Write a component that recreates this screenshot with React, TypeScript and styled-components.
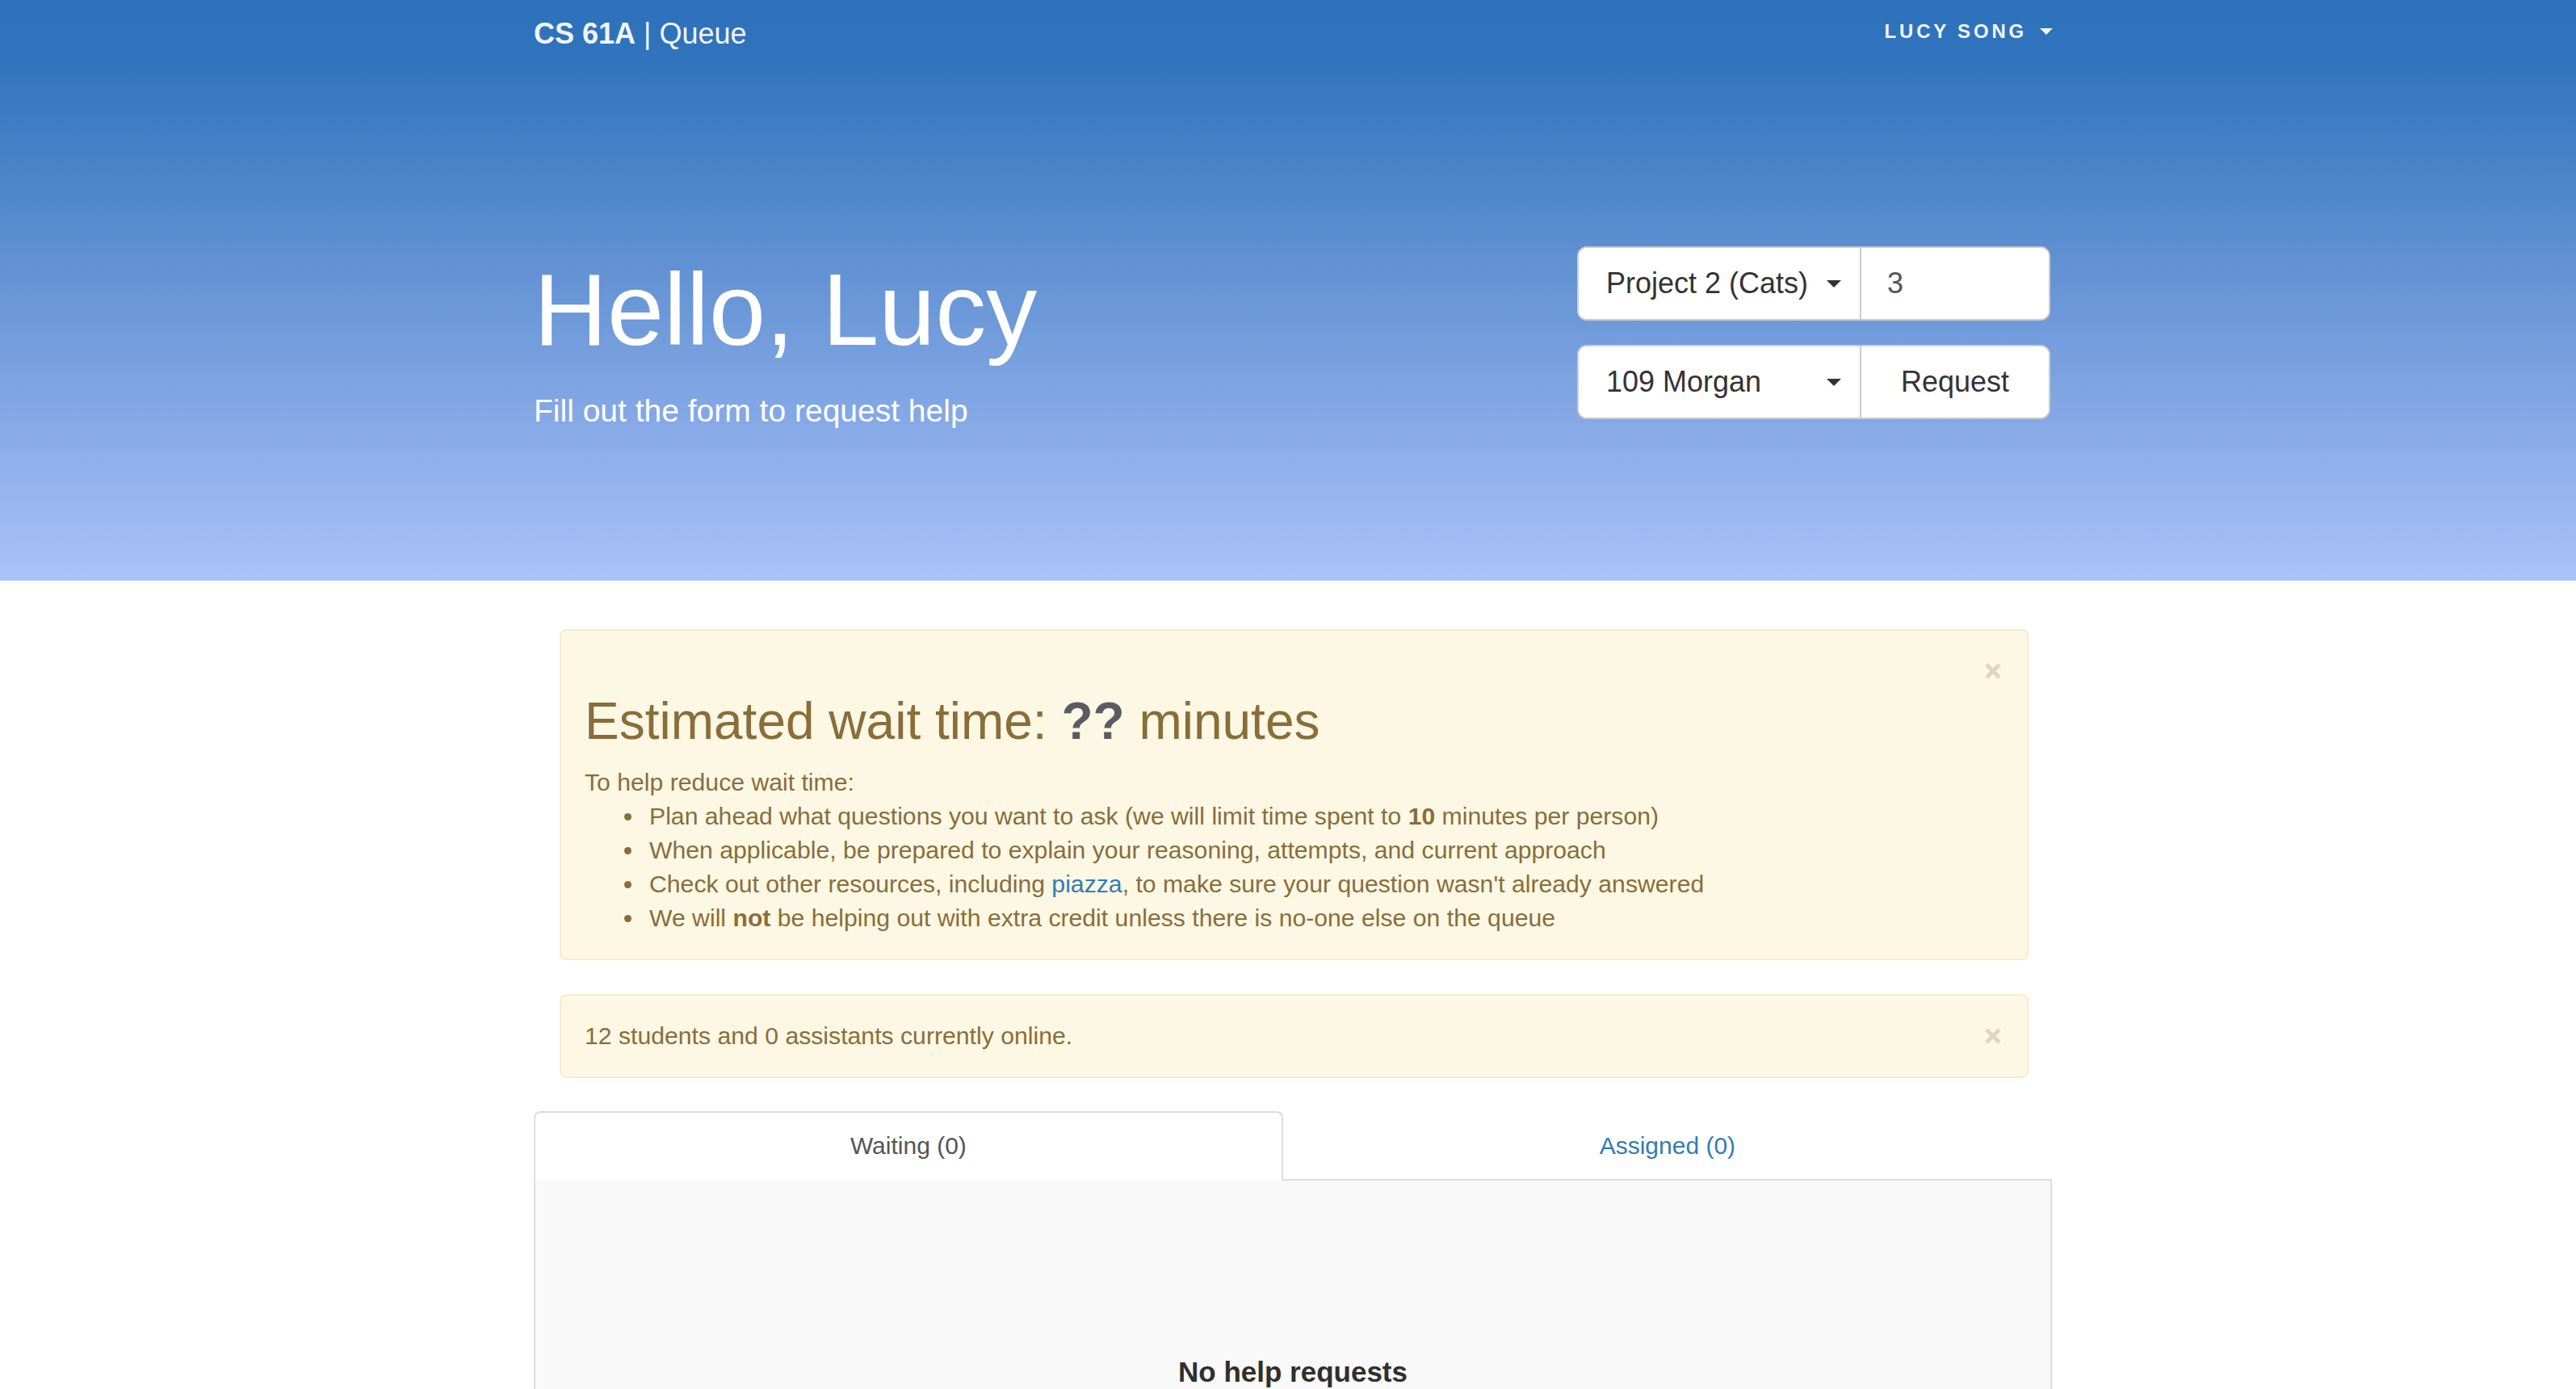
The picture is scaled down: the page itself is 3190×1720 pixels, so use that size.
import React from "react";
import styled, { createGlobalStyle } from "styled-components";

const GlobalStyle = createGlobalStyle`
  html, body {
    margin: 0;
    padding: 0;
    background: #ffffff;
  }
  body {
    font-family: "Liberation Sans", Helvetica, Arial, sans-serif;
    font-size: 30px;
    line-height: 42px;
    color: #333333;
  }
  * {
    box-sizing: border-box;
  }
`;

const Container = styled.div`
  width: 1880px;
  margin-left: calc(50% - 934px);
`;

const Header = styled.header`
  background: linear-gradient(
    180deg,
    #2d71ba 0%,
    #3074bd 10%,
    #5489cd 36%,
    #acc1f8 100%
  );
`;

const NavBar = styled(Container)`
  display: flex;
  align-items: center;
  justify-content: space-between;
  height: 82px;
`;

const Brand = styled.a`
  padding-top: 2px;
  font-size: 36px;
  line-height: 40px;
  color: #f2f4f7;
  text-decoration: none;
  white-space: pre;
`;

const BrandStrong = styled.span`
  font-weight: 700;
`;

const UserMenu = styled.button`
  display: flex;
  align-items: center;
  gap: 16px;
  padding: 0 0 4px 0;
  margin-right: -1px;
  border: none;
  background: transparent;
  font-family: inherit;
  font-size: 24px;
  line-height: 28px;
  font-weight: 700;
  letter-spacing: 3.8px;
  text-transform: uppercase;
  color: #f2f4f7;
`;

const Caret = styled.span<{ $size?: number; $color?: string }>`
  display: inline-block;
  width: 0;
  height: 0;
  border-top: ${(p) => p.$size ?? 8}px solid ${(p) => p.$color ?? "#f2f4f7"};
  border-left: ${(p) => p.$size ?? 8}px solid transparent;
  border-right: ${(p) => p.$size ?? 8}px solid transparent;
`;

const HeroBody = styled(Container)`
  display: flex;
  justify-content: space-between;
  align-items: flex-start;
  padding: 223px 0 182px;
`;

const HeroText = styled.div`
  padding-top: 10px;
  color: #ffffff;
`;

const Title = styled.h1`
  margin: 0;
  font-size: 126px;
  line-height: 1.1;
  font-weight: 400;
  color: #ffffff;
`;

const Subtitle = styled.p`
  margin: 27px 0 0;
  font-size: 39px;
  line-height: 56px;
  font-weight: 300;
  color: #ffffff;
`;

const RequestForm = styled.form`
  display: flex;
  flex-direction: column;
  gap: 30px;
  width: 586px;
  margin: 0 2px 0 0;
`;

const InputGroup = styled.div`
  display: flex;
  height: 92px;
  background: #ffffff;
  border: 2px solid #cccccc;
  border-radius: 12px;
  overflow: hidden;
`;

const SelectCell = styled.button`
  display: flex;
  align-items: center;
  justify-content: space-between;
  width: 350px;
  padding: 0 23px 0 34px;
  border: none;
  border-right: 2px solid #cccccc;
  background: #ffffff;
  font-family: inherit;
  font-size: 36px;
  line-height: 48px;
  color: #333333;
  text-align: left;
`;

const NumberInput = styled.input`
  flex: 1;
  min-width: 0;
  padding: 0 32px;
  border: none;
  outline: none;
  background: #ffffff;
  font-family: inherit;
  font-size: 36px;
  color: #555555;
`;

const SubmitButton = styled.button`
  flex: 1;
  border: none;
  background: #ffffff;
  font-family: inherit;
  font-size: 36px;
  line-height: 48px;
  color: #333333;
`;

const Main = styled(Container)`
  padding-top: 60px;
`;

const AlertStack = styled.div`
  display: flex;
  flex-direction: column;
  gap: 42px;
  margin: 0 29px 41px 32px;
`;

const Alert = styled.div`
  position: relative;
  background: #fcf8e3;
  border: 2px solid #faebcc;
  border-radius: 8px;
  padding: 29px 70px 29px 29px;
  color: #8a6d3b;
  font-size: 30.2px;
  line-height: 42px;
`;

const CloseButton = styled.button`
  position: absolute;
  top: 40px;
  right: 32px;
  width: 20px;
  height: 20px;
  padding: 0;
  border: none;
  background: transparent;
  display: flex;
`;

const WaitHeading = styled.h2`
  margin: 48px 0 20px;
  font-size: 64px;
  line-height: 70px;
  font-weight: 400;
  color: #8a6d3b;
`;

const Unknown = styled.strong`
  font-weight: 700;
  color: #5b5c63;
`;

const Tips = styled.ul`
  margin: 0;
  padding-left: 74px;
`;

const Tip = styled.li`
  padding-left: 6px;
`;

const Bold = styled.strong`
  font-weight: 700;
`;

const Link = styled.a`
  color: #337ab7;
  text-decoration: none;
`;

const TabList = styled.div`
  display: flex;
  border-bottom: 2px solid #dddddd;
`;

const Tab = styled.button<{ $active?: boolean }>`
  flex: 1 1 auto;
  margin-bottom: -2px;
  padding: 20px 20px 22px;
  border: 2px solid ${(p) => (p.$active ? "#dddddd" : "transparent")};
  border-bottom: none;
  border-radius: 8px 8px 0 0;
  background: ${(p) => (p.$active ? "#ffffff" : "transparent")};
  font-family: inherit;
  font-size: 30px;
  line-height: 42px;
  color: ${(p) => (p.$active ? "#555555" : "#337ab7")};
`;

const Panel = styled.div`
  background: #f9f9f9;
  border: 2px solid #dddddd;
  border-top: none;
  padding: 217px 0 240px;
  text-align: center;
`;

const EmptyMessage = styled.h4`
  margin: 0;
  font-size: 35px;
  line-height: 40px;
  font-weight: 700;
  color: #2f2f2f;
`;

const CloseIcon = () => (
  <svg width="20" height="20" viewBox="0 0 20 20">
    <path d="M2 2 L18 18 M18 2 L2 18" stroke="#ddd6c0" strokeWidth="5" />
  </svg>
);

export default function App() {
  return (
    <>
      <GlobalStyle />
      <Header>
        <NavBar>
          <Brand href="#">
            <BrandStrong>CS 61A</BrandStrong> | Queue
          </Brand>
          <UserMenu type="button">
            Lucy Song
            <Caret />
          </UserMenu>
        </NavBar>
        <HeroBody>
          <HeroText>
            <Title>Hello, Lucy</Title>
            <Subtitle>Fill out the form to request help</Subtitle>
          </HeroText>
          <RequestForm onSubmit={(e) => e.preventDefault()}>
            <InputGroup>
              <SelectCell type="button">
                Project 2 (Cats)
                <Caret $size={9} $color="#333333" />
              </SelectCell>
              <NumberInput defaultValue="3" />
            </InputGroup>
            <InputGroup>
              <SelectCell type="button">
                109 Morgan
                <Caret $size={9} $color="#333333" />
              </SelectCell>
              <SubmitButton type="submit">Request</SubmitButton>
            </InputGroup>
          </RequestForm>
        </HeroBody>
      </Header>
      <Main>
        <AlertStack>
          <Alert>
            <CloseButton type="button" aria-label="Close">
              <CloseIcon />
            </CloseButton>
            <WaitHeading>
              Estimated wait time: <Unknown>??</Unknown> minutes
            </WaitHeading>
            To help reduce wait time:
            <Tips>
              <Tip>
                Plan ahead what questions you want to ask (we will limit time
                spent to <Bold>10</Bold> minutes per person)
              </Tip>
              <Tip>
                When applicable, be prepared to explain your reasoning,
                attempts, and current approach
              </Tip>
              <Tip>
                Check out other resources, including <Link href="#">piazza</Link>
                , to make sure your question wasn't already answered
              </Tip>
              <Tip>
                We will <Bold>not</Bold> be helping out with extra credit unless
                there is no-one else on the queue
              </Tip>
            </Tips>
          </Alert>
          <Alert>
            <CloseButton type="button" aria-label="Close">
              <CloseIcon />
            </CloseButton>
            12 students and 0 assistants currently online.
          </Alert>
        </AlertStack>
        <TabList>
          <Tab type="button" $active>
            Waiting (0)
          </Tab>
          <Tab type="button">Assigned (0)</Tab>
        </TabList>
        <Panel>
          <EmptyMessage>No help requests</EmptyMessage>
        </Panel>
      </Main>
    </>
  );
}
